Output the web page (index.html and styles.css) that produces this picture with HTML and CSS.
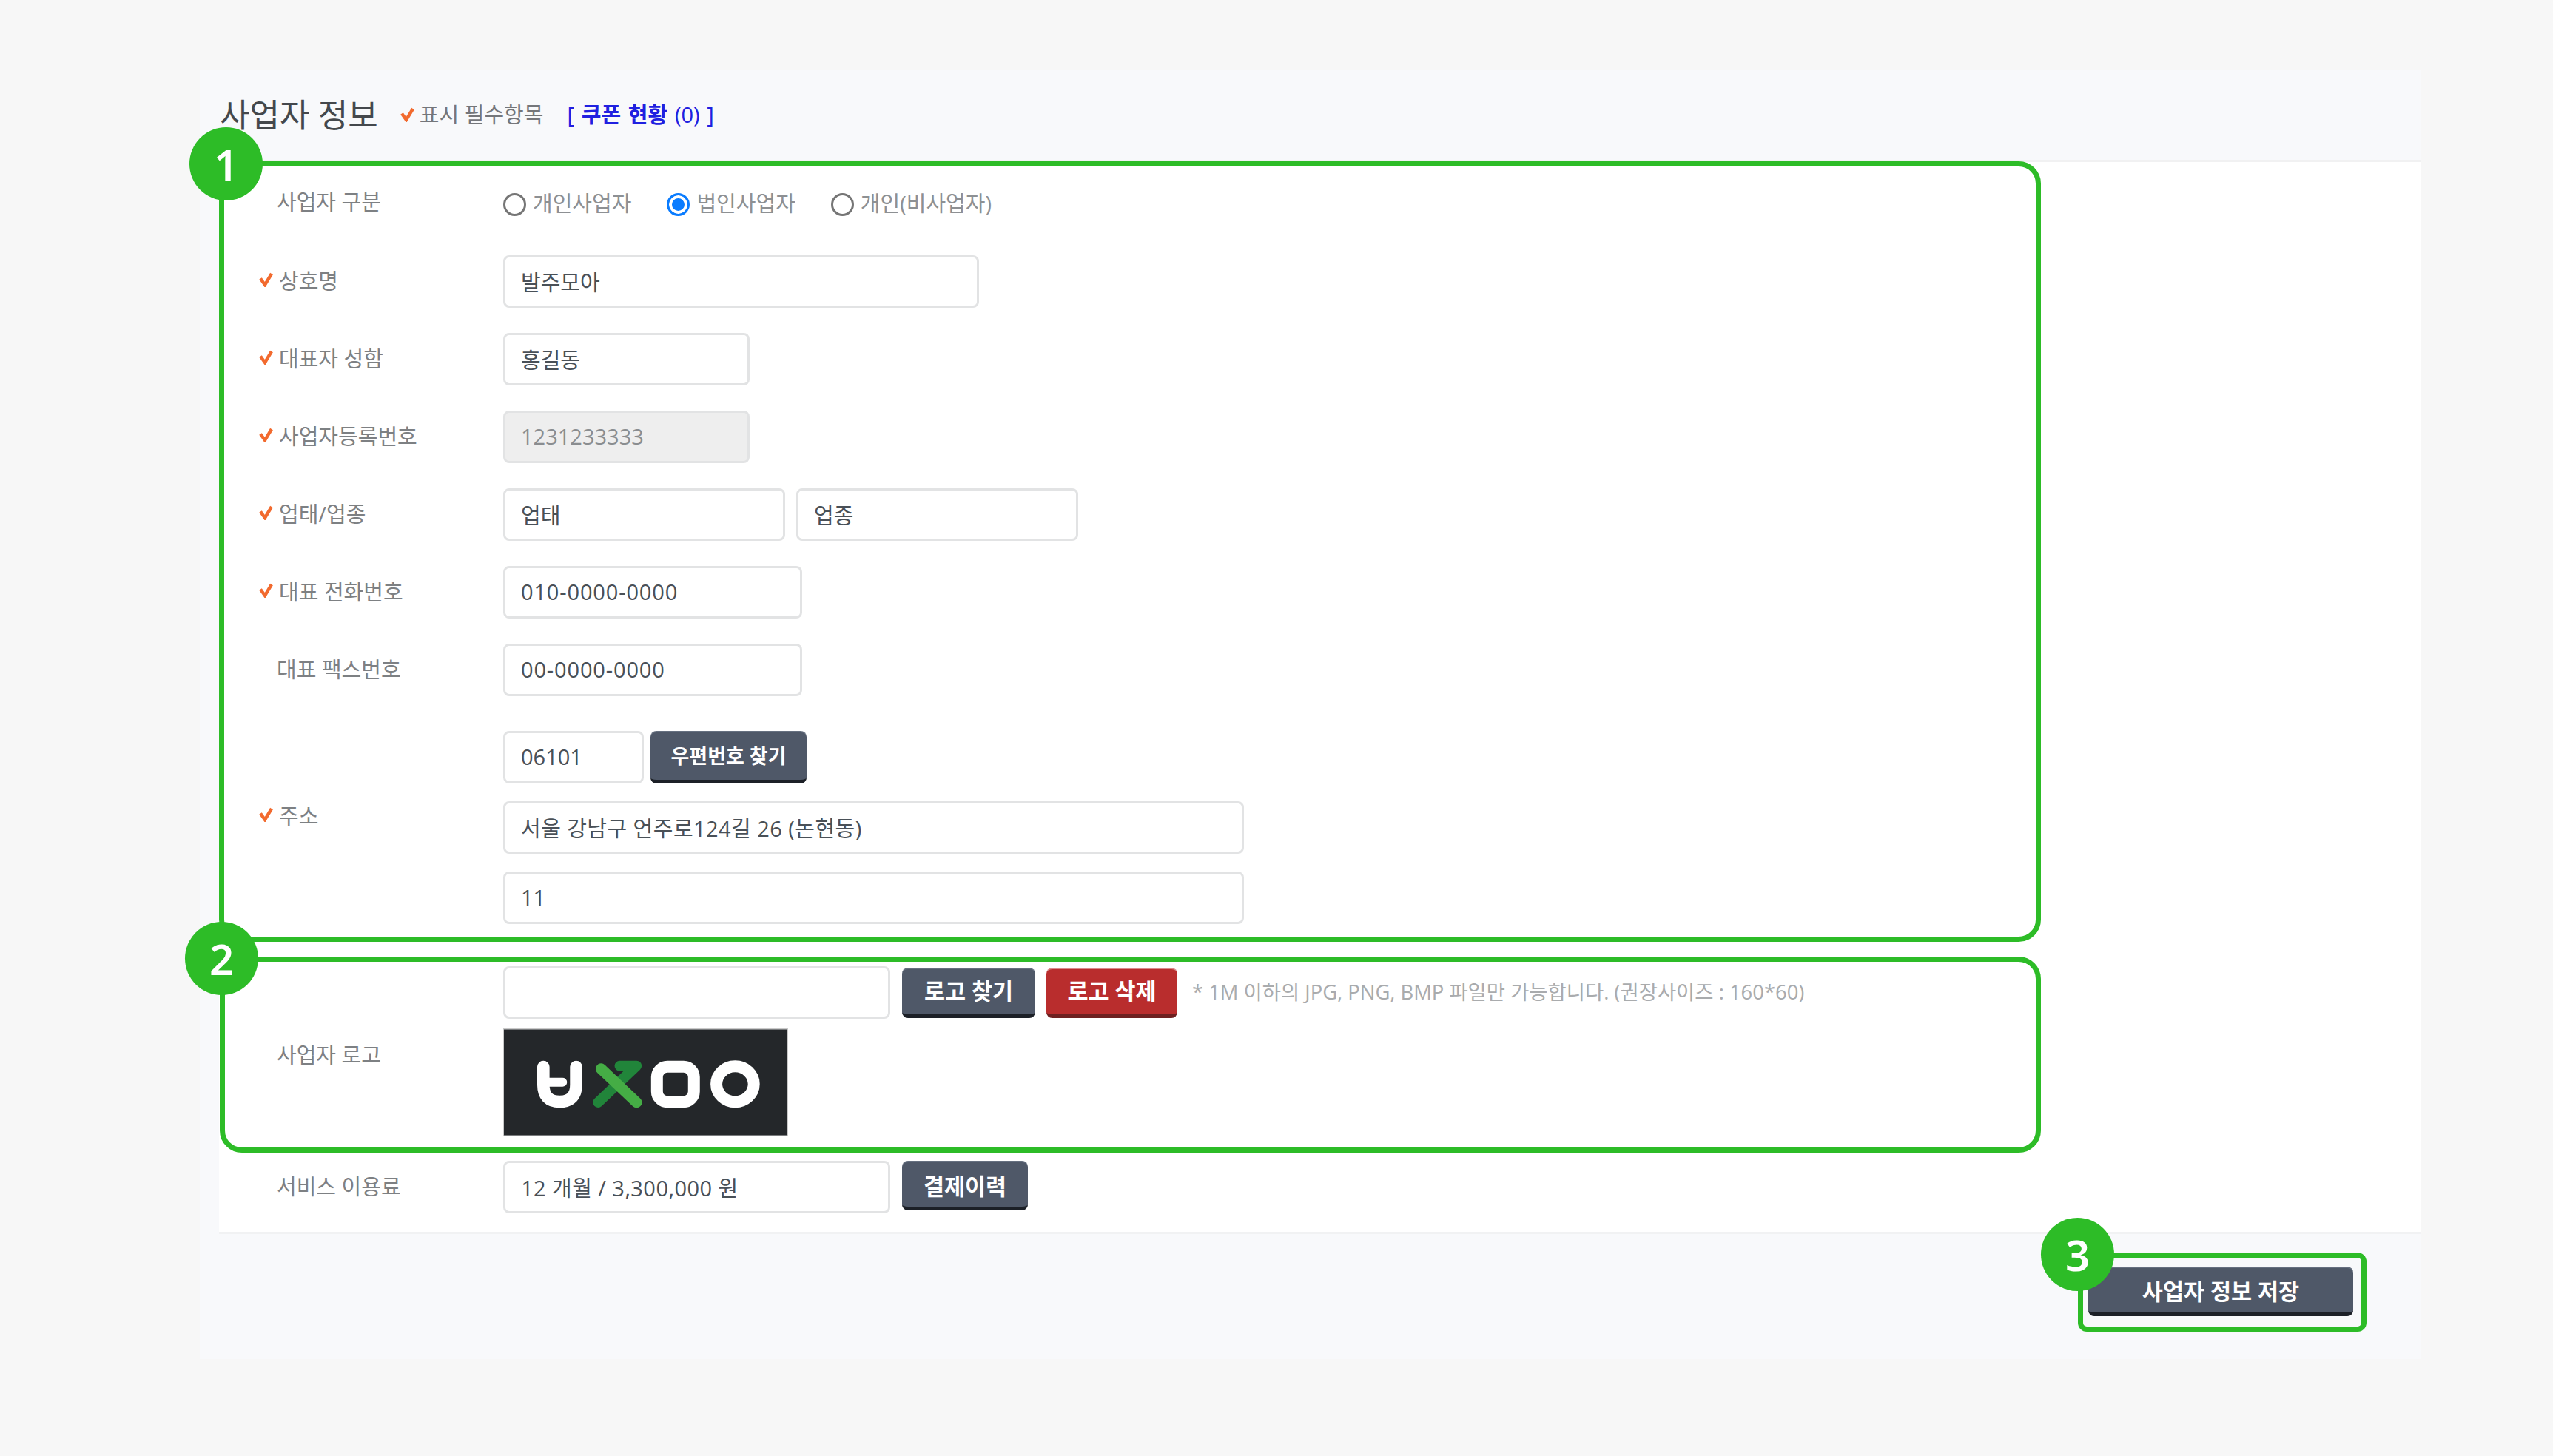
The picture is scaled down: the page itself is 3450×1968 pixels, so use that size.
FILE: index.html
```html
<!DOCTYPE html>
<html lang="ko">
<head>
<meta charset="utf-8">
<title>사업자 정보</title>
<link rel="stylesheet" href="styles.css">
</head>
<body>
<svg class="defs" width="0" height="0" aria-hidden="true"><defs>
  <symbol id="check" viewBox="0 0 19 20"><path d="M2 8.5 L8 17 L17 2" fill="none" stroke="#f26a2e" stroke-width="4.4"/></symbol>
</defs></svg>
<main class="panel">
  <header class="panel-head">
    <h1 class="title">사업자 정보</h1>
    <span class="required"><svg class="check"><use href="#check"/></svg>표시 필수항목</span>
    <a class="coupon" href="#">[ <b>쿠폰 현황</b> (0) ]</a>
  </header>
  <form class="panel-body">
    <div class="row">
      <div class="label plain label-kind">사업자 구분</div>
      <div class="radios">
        <label class="radio"><input type="radio" name="kind"><span>개인사업자</span></label>
        <label class="radio"><input type="radio" name="kind" checked><span>법인사업자</span></label>
        <label class="radio"><input type="radio" name="kind"><span>개인(비사업자)</span></label>
      </div>
    </div>
    <div class="row">
      <div class="label"><svg class="check"><use href="#check"/></svg>상호명</div>
      <div class="fields"><input class="input w-name" value="발주모아"></div>
    </div>
    <div class="row">
      <div class="label"><svg class="check"><use href="#check"/></svg>대표자 성함</div>
      <div class="fields"><input class="input w-short" value="홍길동"></div>
    </div>
    <div class="row">
      <div class="label"><svg class="check"><use href="#check"/></svg>사업자등록번호</div>
      <div class="fields"><input class="input w-short" value="1231233333" disabled></div>
    </div>
    <div class="row">
      <div class="label"><svg class="check"><use href="#check"/></svg>업태/업종</div>
      <div class="fields gap-wide"><input class="input w-biz" value="업태"><input class="input w-biz" value="업종"></div>
    </div>
    <div class="row">
      <div class="label"><svg class="check"><use href="#check"/></svg>대표 전화번호</div>
      <div class="fields"><input class="input w-tel" value="010-0000-0000"></div>
    </div>
    <div class="row">
      <div class="label plain">대표 팩스번호</div>
      <div class="fields"><input class="input w-tel" value="00-0000-0000"></div>
    </div>
    <div class="row row-address">
      <div class="label label-address"><svg class="check"><use href="#check"/></svg>주소</div>
      <div class="stack">
        <div class="fields gap-tight"><input class="input w-zip" value="06101"><button type="button" class="btn btn-small">우편번호 찾기</button></div>
        <input class="input w-addr spaced" value="서울 강남구 언주로124길 26 (논현동)">
        <input class="input w-addr" value="11">
      </div>
    </div>
    <div class="row row-logo">
      <div class="label plain label-logo">사업자 로고</div>
      <div class="logo-stack">
        <div class="fields gap-wide">
          <input class="input w-file">
          <button type="button" class="btn btn-logo">로고 찾기</button>
          <button type="button" class="btn btn-danger">로고 삭제</button>
          <span class="hint">* 1M 이하의 JPG, PNG, BMP 파일만 가능합니다. (권장사이즈 : 160*60)</span>
        </div>
        <svg class="logo" viewBox="62 68 1150 430" role="img" aria-label="uxoo">
          <rect x="62" y="68" width="1150" height="430" fill="#24272a"/>
          <g fill="none" stroke-linecap="round" stroke-linejoin="round">
            <path d="M222 220 V292 Q222 361 288 361 Q355 361 355 292 V220" stroke="#fff" stroke-width="50"/>
            <path d="M232 282 H300" stroke="#fff" stroke-width="36"/>
            <path d="M444 364 L600 216 H532" stroke="#21853a" stroke-width="42"/>
            <path d="M456 228 L600 364" stroke="#45ad45" stroke-width="44"/>
            <rect x="683" y="219" width="150" height="143" rx="42" stroke="#fff" stroke-width="48"/>
            <ellipse cx="1000" cy="290" rx="76" ry="72" stroke="#fff" stroke-width="48"/>
          </g>
        </svg>
      </div>
    </div>
    <div class="row row-fee">
      <div class="label plain">서비스 이용료</div>
      <div class="fields gap-wide"><input class="input w-file spaced" value="12 개월 / 3,300,000 원"><button type="button" class="btn btn-pay">결제이력</button></div>
    </div>
  </form>
  <footer class="panel-foot"><button type="button" class="btn btn-save">사업자 정보 저장</button></footer>
</main>

<div class="mark mark-1"></div>
<div class="mark mark-2"></div>
<div class="mark mark-3"></div>
<span class="badge badge-1">1</span>
<span class="badge badge-2">2</span>
<span class="badge badge-3">3</span>
</body>
</html>
```

FILE: styles.css
```css
* { box-sizing: border-box; }
html, body { margin: 0; padding: 0; }
body {
  position: relative;
  width: 3450px;
  height: 1968px;
  overflow: hidden;
  padding: 94px 0 0 270px;
  background: #f7f7f7;
  font-family: "Open Sans", "Noto Sans CJK KR", sans-serif;
  font-size: 29px;
  color: #495057;
}
.defs { position: absolute; }

.panel { width: 3001px; height: 1743px; background: #f8f9fb; }

.panel-head {
  display: flex;
  align-items: center;
  height: 125px;
  padding: 0 0 4px 27px;
  border-bottom: 3px solid #f1f1f2;
}
.title { margin: 0 30px 0 0; font-size: 44px; font-weight: 400; color: #44484c; }
.required { display: flex; align-items: center; gap: 7px; margin-right: 32px; color: #74767a; }
.required .check { margin-top: 3px; }
.coupon { color: #2020e0; text-decoration: none; word-spacing: 2.2px; }
.coupon b { font-weight: 700; }

.check { width: 19px; height: 20px; flex: none; }

.panel-body {
  display: flex;
  flex-direction: column;
  gap: 34px;
  height: 1449px;
  margin-left: 26px;
  padding-top: 21px;
  background: #fff;
  border-bottom: 3px solid #f1f2f3;
}
.row { display: grid; grid-template-columns: 384px 1fr; min-height: 71px; }

.label {
  display: flex;
  align-items: center;
  gap: 8px;
  padding: 0 0 6px 54px;
  color: #7d8083;
}
.label.plain { padding-left: 78px; }
.label-kind { padding-bottom: 9px; }
.label-address { padding-bottom: 22px; }
.label-logo { padding: 6px 0 0; }

.radios { display: flex; align-items: center; gap: 48px; }
.radio { display: flex; align-items: center; gap: 9px; color: #8d9093; }
.radio span { padding-bottom: 6px; }
.radio input {
  appearance: none;
  width: 31px;
  height: 31px;
  margin: 1px 0 0;
  border: 3px solid #767676;
  border-radius: 50%;
  background: #fff;
}
.radio input:checked {
  border-color: #0a7cff;
  background: #0a7cff;
  box-shadow: inset 0 0 0 4px #fff;
}

.fields { display: flex; align-items: center; }
.gap-wide { gap: 15px; }
.gap-tight { gap: 9px; }

.input {
  height: 71px;
  padding: 0 20px 2px 21px;
  border: 3px solid #e2e3e4;
  border-radius: 8px;
  background: #fff;
  font: inherit;
  color: #495057;
  outline: none;
}
.input:disabled { background: #eeeeee; color: #8a8d90; }
.spaced { letter-spacing: 0.45px; }
.w-name { width: 643px; }
.w-short { width: 333px; }
.w-biz { width: 381px; }
.w-tel { width: 404px; letter-spacing: 0.85px; }
.w-zip { width: 190px; }
.w-addr { width: 1001px; }
.w-file { width: 523px; }

.stack { display: flex; flex-direction: column; gap: 24px; padding-top: 13px; }

.row-logo { margin-top: 23px; }
.logo-stack { display: flex; flex-direction: column; gap: 14px; }
.logo {
  display: block;
  width: 383px;
  height: 144px;
  margin-left: 1px;
  outline: 1px solid #c9c9c9;
}
.hint { margin: 0 0 6px 5px; font-size: 27.4px; color: #a9abad; }

.btn {
  height: 71px;
  padding: 0 0 4px;
  border: 0;
  border-top: 2px solid #667080;
  border-bottom: 5px solid #1c2027;
  border-radius: 8px;
  background: #4f5868;
  font: inherit;
  font-size: 30.5px;
  font-weight: 700;
  color: #fff;
}
.btn-small { width: 211px; font-size: 27px; }
.btn-logo { width: 180px; height: 68px; margin-left: 1px; padding-bottom: 5px; }
.btn-danger {
  width: 177px;
  height: 68px;
  padding-bottom: 5px;
  border-top-color: #d98a8a;
  border-bottom-color: #6e2020;
  background: #b92d2d;
}
.btn-pay { width: 170px; height: 67px; margin: -4px 0 0 1px; padding: 2px 0 0; }
.btn-save { width: 358px; height: 67px; padding: 0; }

.panel-foot { display: flex; justify-content: flex-end; padding: 44px 91px 0 0; }

/* annotation layer over the screenshot */
.mark { position: absolute; border: 7px solid #2dbc27; border-radius: 30px; }
.mark-1 { left: 296px; top: 218px; width: 2462px; height: 1055px; }
.mark-2 { left: 297px; top: 1293px; width: 2461px; height: 265px; }
.mark-3 { left: 2808px; top: 1693px; width: 390px; height: 107px; border-radius: 12px; }

.badge {
  position: absolute;
  display: flex;
  align-items: center;
  justify-content: center;
  width: 99px;
  height: 99px;
  border-radius: 50%;
  background: #2dbc27;
  font-family: "Noto Sans", sans-serif;
  font-size: 58px;
  font-weight: 600;
  color: #fff;
}
.badge-1 { left: 256px; top: 172px; }
.badge-2 { left: 250px; top: 1246px; }
.badge-3 { left: 2758px; top: 1646px; }
```
